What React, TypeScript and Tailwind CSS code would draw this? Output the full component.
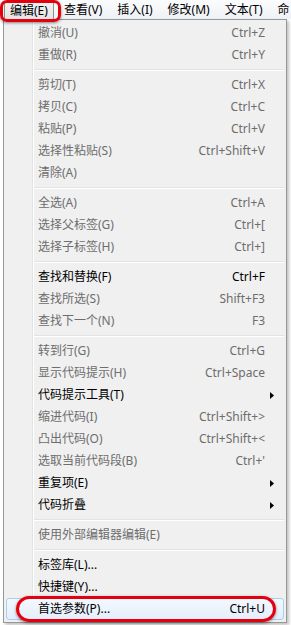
type Item = {
  label: string;
  shortcut?: string;
  enabled?: boolean;
  sub?: boolean;
  hover?: boolean;
};

type Entry = Item | "sep";

const menuBar = ["编辑(E)", "查看(V)", "插入(I)", "修改(M)", "文本(T)", "命"];

const items: Entry[] = [
  { label: "撤消(U)", shortcut: "Ctrl+Z" },
  { label: "重做(R)", shortcut: "Ctrl+Y" },
  "sep",
  { label: "剪切(T)", shortcut: "Ctrl+X" },
  { label: "拷贝(C)", shortcut: "Ctrl+C" },
  { label: "粘贴(P)", shortcut: "Ctrl+V" },
  { label: "选择性粘贴(S)", shortcut: "Ctrl+Shift+V" },
  { label: "清除(A)" },
  "sep",
  { label: "全选(A)", shortcut: "Ctrl+A" },
  { label: "选择父标签(G)", shortcut: "Ctrl+[" },
  { label: "选择子标签(H)", shortcut: "Ctrl+]" },
  "sep",
  { label: "查找和替换(F)", shortcut: "Ctrl+F", enabled: true },
  { label: "查找所选(S)", shortcut: "Shift+F3" },
  { label: "查找下一个(N)", shortcut: "F3" },
  "sep",
  { label: "转到行(G)", shortcut: "Ctrl+G" },
  { label: "显示代码提示(H)", shortcut: "Ctrl+Space" },
  { label: "代码提示工具(T)", enabled: true, sub: true },
  { label: "缩进代码(I)", shortcut: "Ctrl+Shift+>" },
  { label: "凸出代码(O)", shortcut: "Ctrl+Shift+<" },
  { label: "选取当前代码段(B)", shortcut: "Ctrl+'" },
  { label: "重复项(E)", enabled: true, sub: true },
  { label: "代码折叠", enabled: true, sub: true },
  "sep",
  { label: "使用外部编辑器编辑(E)" },
  "sep",
  { label: "标签库(L)...", enabled: true },
  { label: "快捷键(Y)...", enabled: true },
  { label: "首选参数(P)...", shortcut: "Ctrl+U", enabled: true, hover: true },
];

function Row({ it }: { it: Item }) {
  const color = it.enabled ? "text-black" : "text-[#6d6d6d]";
  return (
    <div className="relative h-[22px] px-[2px]">
      <div
        className={
          "flex h-full items-center rounded-[3px] border " +
          (it.hover
            ? "border-[#a8cff3] bg-[linear-gradient(to_bottom,#f3f8fe,#e4eefb)]"
            : "border-transparent")
        }
      >
        <span className={"flex-1 pl-[31px] " + color}>{it.label}</span>
        {it.shortcut && <span className={color}>{it.shortcut}</span>}
        <span className="flex w-[18px] items-center pl-[5px]">
          {it.sub && (
            <svg width="4" height="7" viewBox="0 0 4 7">
              <path d="M0 0 L4 3.5 L0 7 Z" fill="#000" />
            </svg>
          )}
        </span>
      </div>
      {it.hover && (
        <div className="absolute left-[12px] right-[10px] top-[-2px] bottom-[-2px] rounded-full border-[3px] border-[#e3000f] shadow-[0_1px_3px_rgba(0,0,0,0.45)]" />
      )}
    </div>
  );
}

export default function App() {
  return (
    <div
      className="relative h-[625px] w-[291px] overflow-hidden bg-white text-[12px] leading-none"
      style={{ fontFamily: '"Noto Sans", "Noto Sans CJK SC", sans-serif' }}
    >
      {/* menu bar */}
      <div className="flex h-[19px] items-end gap-[1px] bg-[linear-gradient(to_bottom,#fbfcfd,#eef1f5)] pl-[4px]">
        {menuBar.map((m, i) => (
          <div
            key={m}
            className={
              "flex h-[18px] items-center whitespace-nowrap " +
              (i === 0
                ? "mr-[2px] border border-b-0 border-[#8e8f8f] bg-[linear-gradient(to_bottom,#f2f2f2,#e4e4e4)] px-[5px] text-black"
                : "px-[7px] text-black")
            }
          >
            {m}
          </div>
        ))}
      </div>
      <div className="absolute left-0 top-0 h-[22px] w-[61px] rounded-[7px] border-[3px] border-[#e3000f] shadow-[0_1px_3px_rgba(0,0,0,0.45)]" />

      {/* dropdown */}
      <div className="ml-[3px] w-[284px] border border-[#979797] bg-[#f0f0f0] bg-[linear-gradient(to_right,#f0f0f0_28px,#e2e3e3_28px,#e2e3e3_29px,#ffffff_29px,#ffffff_30px,#f0f0f0_30px)] py-[2px] shadow-[2px_2px_3px_rgba(0,0,0,0.25)]">
        {items.map((it, i) =>
          it === "sep" ? (
            <div key={i} className="flex h-[8px] flex-col justify-center pl-[30px] pr-[2px]">
              <div className="h-px bg-[#e2e3e3]" />
              <div className="h-px bg-white" />
            </div>
          ) : (
            <Row key={i} it={it} />
          )
        )}
      </div>
    </div>
  );
}
